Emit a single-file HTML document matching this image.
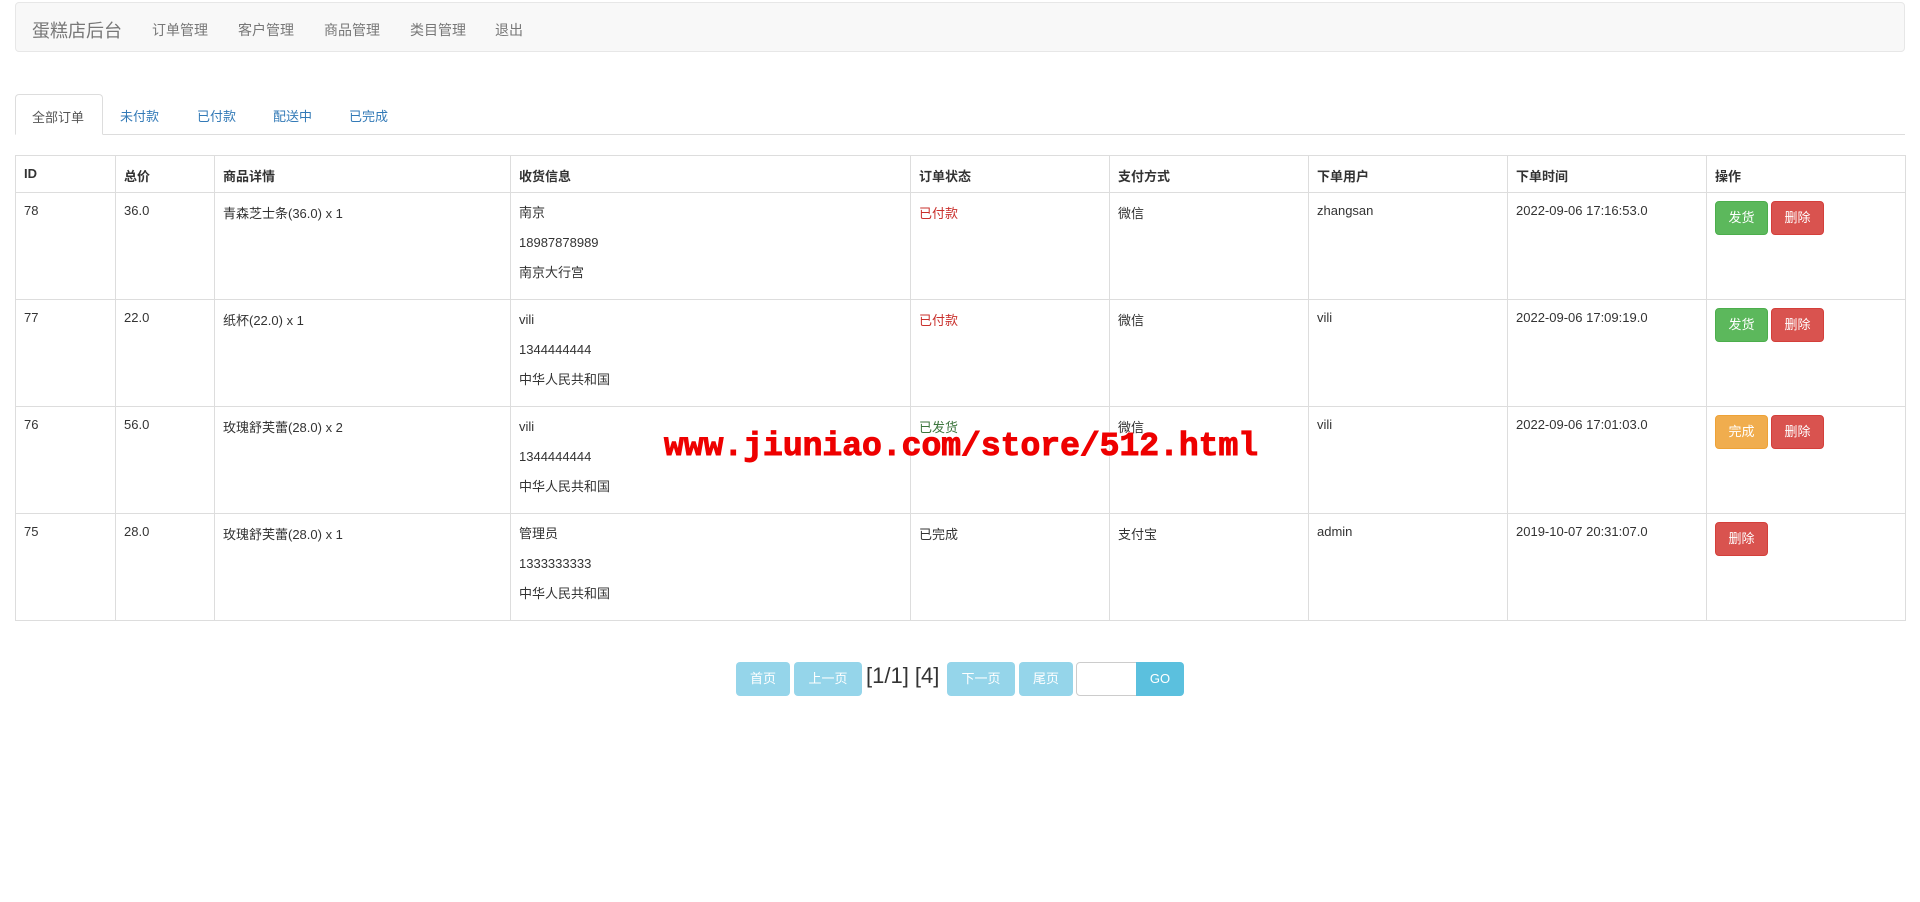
<!DOCTYPE html>
<html><head><meta charset="utf-8">
<style>
*{box-sizing:border-box;margin:0;padding:0}
body{width:1920px;height:902px;background:#fff;font-family:"Liberation Sans","Noto Sans CJK SC",sans-serif;font-size:13px;color:#333;position:relative;overflow:hidden}
.nav{position:absolute;left:15px;top:2px;width:1890px;height:50px;background:#f8f8f8;border:1px solid #e7e7e7;border-radius:4px}
.nav .brand{position:absolute;left:16px;top:14px;font-size:18px;color:#777}
.nav a{position:absolute;top:17px;color:#777;font-size:14px}
.tabs{position:absolute;left:15px;top:134px;width:1890px;border-top:1px solid #ddd}
.tab{position:absolute;top:106px;font-size:13px;color:#337ab7}
.tab.act{left:15px;top:94px;width:88px;height:41px;border:1px solid #ddd;border-bottom-color:#fff;border-radius:4px 4px 0 0;background:#fff;color:#555;padding:12px 0 0 16px}
table{position:absolute;left:15px;top:155px;width:1890px;border-collapse:collapse;table-layout:fixed}
td,th{border:1px solid #ddd;vertical-align:top;text-align:left;padding:8px 8px 0 8px;overflow:hidden}
th{height:37px;font-weight:bold;font-size:13px;padding-top:10px}
tr.row td{height:107px;padding-top:10px}
td p{line-height:20px;margin-bottom:10px}
td p:last-child{margin-bottom:0}
.red{color:#c9302c}.green{color:#3c763d}
.btn{display:inline-block;width:53px;height:34px;border-radius:4px;color:#fff;text-align:center;line-height:32px;font-size:13px;margin-right:3px;margin-top:-2px;vertical-align:top}
.bg{background:#5cb85c;border:1px solid #4cae4c}.br{background:#d9534f;border:1px solid #d43f3a}.bo{background:#f0ad4e;border:1px solid #eea236}
.pg{position:absolute;top:662px;height:34px;border-radius:4px;color:#fff;text-align:center;line-height:34px;font-size:13px;background:#95d5ea}
.wm{position:absolute;left:664px;top:428px;font-family:"Liberation Mono",monospace;font-weight:bold;font-size:33px;color:#e00;-webkit-text-stroke:1px #e00;text-shadow:1px 1px 0 #fff,-1px -1px 0 #fff}
</style></head><body>
<div class="nav"><span class="brand">蛋糕店后台</span>
<a style="left:136px">订单管理</a><a style="left:222px">客户管理</a><a style="left:308px">商品管理</a><a style="left:394px">类目管理</a><a style="left:479px">退出</a></div>
<div class="tabs"></div>
<div class="tab act">全部订单</div>
<div class="tab" style="left:120px">未付款</div>
<div class="tab" style="left:197px">已付款</div>
<div class="tab" style="left:273px">配送中</div>
<div class="tab" style="left:349px">已完成</div>
<table>
<colgroup><col style="width:100px"><col style="width:99px"><col style="width:296px"><col style="width:400px"><col style="width:199px"><col style="width:199px"><col style="width:199px"><col style="width:199px"><col style="width:199px"></colgroup>
<tr><th>ID</th><th>总价</th><th>商品详情</th><th>收货信息</th><th>订单状态</th><th>支付方式</th><th>下单用户</th><th>下单时间</th><th>操作</th></tr>
<tr class="row"><td>78</td><td>36.0</td><td>青森芝士条(36.0) x 1</td><td><p>南京</p><p>18987878989</p><p>南京大行宫</p></td><td class="red">已付款</td><td>微信</td><td>zhangsan</td><td>2022-09-06 17:16:53.0</td><td><span class="btn bg">发货</span><span class="btn br">删除</span></td></tr>
<tr class="row"><td>77</td><td>22.0</td><td>纸杯(22.0) x 1</td><td><p>vili</p><p>1344444444</p><p>中华人民共和国</p></td><td class="red">已付款</td><td>微信</td><td>vili</td><td>2022-09-06 17:09:19.0</td><td><span class="btn bg">发货</span><span class="btn br">删除</span></td></tr>
<tr class="row"><td>76</td><td>56.0</td><td>玫瑰舒芙蕾(28.0) x 2</td><td><p>vili</p><p>1344444444</p><p>中华人民共和国</p></td><td class="green">已发货</td><td>微信</td><td>vili</td><td>2022-09-06 17:01:03.0</td><td><span class="btn bo">完成</span><span class="btn br">删除</span></td></tr>
<tr class="row"><td>75</td><td>28.0</td><td>玫瑰舒芙蕾(28.0) x 1</td><td><p>管理员</p><p>1333333333</p><p>中华人民共和国</p></td><td>已完成</td><td>支付宝</td><td>admin</td><td>2019-10-07 20:31:07.0</td><td><span class="btn br">删除</span></td></tr>
</table>
<div class="wm">www.jiuniao.com/store/512.html</div>
<div class="pg" style="left:736px;width:54px">首页</div>
<div class="pg" style="left:794px;width:68px">上一页</div>
<div style="position:absolute;left:866px;top:663px;font-size:22px;color:#333">[1/1] [4]</div>
<div class="pg" style="left:947px;width:68px">下一页</div>
<div class="pg" style="left:1019px;width:54px">尾页</div>
<div style="position:absolute;left:1076px;top:662px;width:61px;height:34px;border:1px solid #ccc;border-radius:4px 0 0 4px;background:#fff"></div>
<div class="pg" style="left:1136px;width:48px;background:#5bc0de;border-radius:0 4px 4px 0">GO</div>
</body></html>
